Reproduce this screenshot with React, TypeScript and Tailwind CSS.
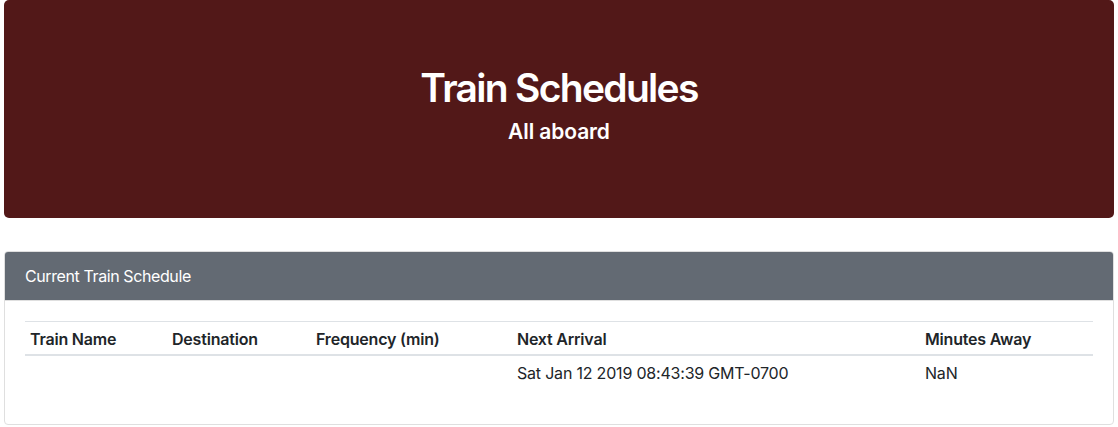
import React from "react";

const cols = [
  { label: "Train Name", w: "w-[142px]" },
  { label: "Destination", w: "w-[144px]" },
  { label: "Frequency (min)", w: "w-[201px]" },
  { label: "Next Arrival", w: "w-[408px]" },
  { label: "Minutes Away", w: "" },
];

export default function App() {
  return (
    <div
      className="min-h-[427px] bg-white text-[#212529]"
      style={{ fontFamily: "Inter, 'Noto Sans', 'Liberation Sans', sans-serif" }}
    >
      <div className="mx-[4px]">
        <div className="bg-[#521818] rounded-[5px] text-white text-center pt-[64px] pb-[66px]">
          <h1 className="text-[39px] leading-[48px] font-semibold mb-[8px] tracking-[-1.7px]">Train Schedules</h1>
          <h5 className="text-[21px] leading-[24px] font-semibold mb-[8px] tracking-[-0.1px]">All aboard</h5>
        </div>

        <div className="mt-[33px] border border-[#dfdfdf] rounded-[4px] overflow-hidden">
          <div className="bg-[#636a73] text-white text-[16px] leading-[24px] px-[20px] py-[12px] border-b border-[#dfdfdf] tracking-[-0.4px]">
            Current Train Schedule
          </div>
          <div className="px-[20px] pt-[20px] pb-[34px]">
            <table className="w-full border-collapse text-[16px] leading-[24px]">
              <thead>
                <tr className="border-t border-[#dee2e6] border-b-2">
                  {cols.map((c) => (
                    <th
                      key={c.label}
                      className={`text-left font-semibold px-[5px] pt-[5px] pb-[3px] border-b-2 border-[#dee2e6] tracking-[-0.2px] ${c.w}`}
                    >
                      {c.label}
                    </th>
                  ))}
                </tr>
              </thead>
              <tbody>
                <tr>
                  <td className="px-[5px] py-[5px]"></td>
                  <td className="px-[5px] py-[5px]"></td>
                  <td className="px-[5px] py-[5px]"></td>
                  <td className="px-[5px] py-[5px] tracking-[-0.2px]">Sat Jan 12 2019 08:43:39 GMT-0700</td>
                  <td className="px-[5px] py-[5px] tracking-[-0.2px]">NaN</td>
                </tr>
              </tbody>
            </table>
          </div>
        </div>
      </div>
    </div>
  );
}
